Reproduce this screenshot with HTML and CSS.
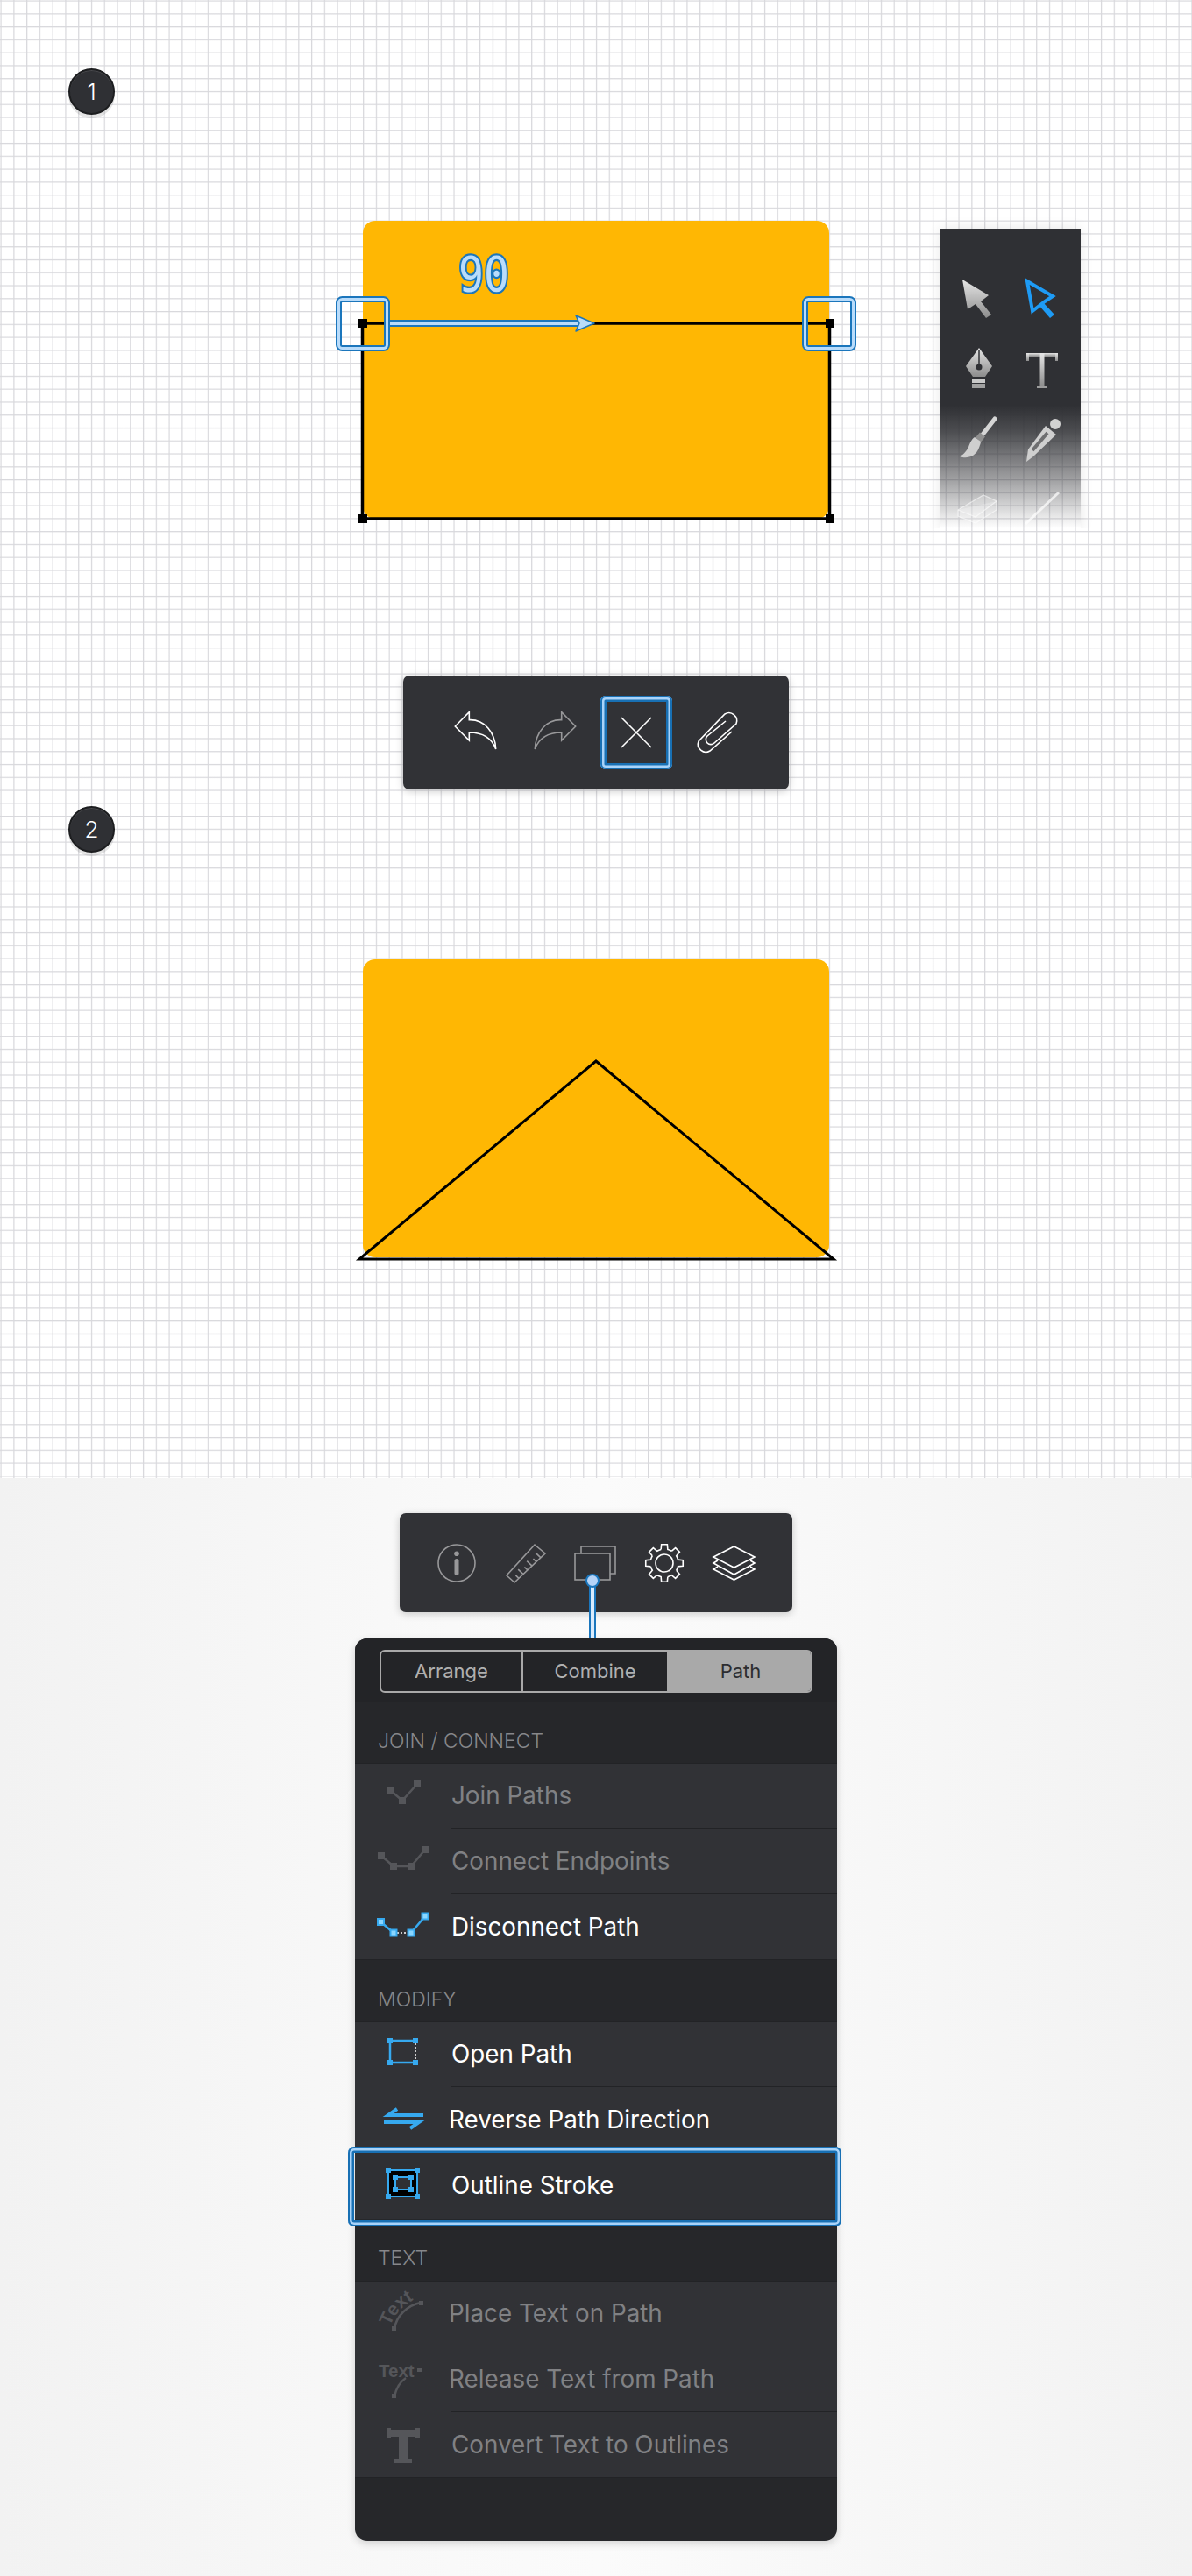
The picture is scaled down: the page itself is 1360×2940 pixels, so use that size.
FILE: index.html
```html
<!DOCTYPE html>
<html lang="en">
<head>
<title>Outline Stroke</title>
<link rel="stylesheet" href="styles.css">
</head>
<body>

<svg class="defs" width="0" height="0">
  <defs>
    <linearGradient id="metal" x1="0" y1="0" x2="0" y2="1">
      <stop offset="0" stop-color="#e6e6e6"/>
      <stop offset="1" stop-color="#8c8c8c"/>
    </linearGradient>
  </defs>
</svg>

<section class="canvas">
  <div class="badge badge-one">1</div>

  <svg class="scene scene-one" width="620" height="370" viewBox="0 0 620 370">
    <rect class="paper" x="44" y="12" width="532" height="340" rx="14"/>
    <path class="outline" d="M43.5 129H576.5V352H43.5Z"/>
    <rect class="node" x="39" y="124" width="10" height="10"/>
    <rect class="node" x="572" y="124" width="10" height="10"/>
    <rect class="node" x="39" y="347" width="10" height="10"/>
    <rect class="node" x="572" y="347" width="10" height="10"/>
    <path class="blue-dark" d="M75 129H292"/>
    <path class="blue-light" d="M75 129H292"/>
    <path class="blue-head" d="M287 120L308 129L287 138L291 129Z"/>
    <rect class="blue-dark hit" x="16.5" y="101.5" width="55" height="56" rx="4"/>
    <rect class="blue-light hit" x="16.5" y="101.5" width="55" height="56" rx="4"/>
    <rect class="blue-dark hit" x="548.5" y="101.5" width="55" height="56" rx="4"/>
    <rect class="blue-light hit" x="548.5" y="101.5" width="55" height="56" rx="4"/>
    <text class="angle" x="153" y="92" textLength="58" lengthAdjust="spacingAndGlyphs">90</text>
  </svg>

  <div class="toolbox">
    <svg class="tool" viewBox="0 0 74 80"><path fill="url(#metal)" d="M18 18L48 36L39 43L51 58L45 62L33 46L24 52Z"/></svg>
    <svg class="tool" viewBox="0 0 74 80"><path class="tool-blue" d="M18 20L47 37L38 43L33 47L24 54Z"/><path class="tool-blue-fill" d="M36 44L49 58L44 62L31 47Z"/></svg>
    <svg class="tool" viewBox="0 0 74 80">
      <path fill="url(#metal)" d="M37 16L52 37L44 49H30L22 37Z"/>
      <path class="tool-cut" d="M37 18V36"/>
      <circle class="tool-hole" cx="37" cy="38" r="3.5"/>
      <rect fill="#c8c8c8" x="29" y="51" width="15" height="5"/>
      <rect fill="#a0a0a0" x="29" y="57" width="15" height="5"/>
    </svg>
    <svg class="tool" viewBox="0 0 74 80">
      <rect fill="url(#metal)" x="17" y="22" width="36" height="4"/>
      <rect fill="url(#metal)" x="17" y="22" width="3" height="9"/>
      <rect fill="url(#metal)" x="50" y="22" width="3" height="9"/>
      <rect fill="url(#metal)" x="32.5" y="22" width="5" height="38"/>
      <rect fill="#9c9c9c" x="29" y="59" width="12" height="3"/>
    </svg>
    <svg class="tool" viewBox="0 0 74 80">
      <path class="tool-handle" d="M55 17L41 35"/>
      <path class="tool-ferrule" d="M41 35L36 41"/>
      <path fill="#cfcfcf" d="M32 38C26 42 26 50 22 54C20 57 17 59 15 60C22 63 33 61 37 50C38 47 39 45 39 43Z"/>
    </svg>
    <svg class="tool" viewBox="0 0 74 80">
      <circle fill="#d2d2d2" cx="50" cy="23" r="6"/>
      <path fill="#cfcfcf" d="M39 25L51 35L25 60L17 66L19 52Z"/>
      <path class="tool-slit" d="M24 53L41 33"/>
    </svg>
    <svg class="tool tool-faint" viewBox="0 0 74 80"><path d="M13 41L42 24L57 31V41L33 56L13 48Z"/><path d="M13 41L33 49L57 31"/></svg>
    <svg class="tool" viewBox="0 0 74 80"><path class="tool-ghost" d="M54 21L16 57"/></svg>
  </div>

  <div class="toolbar toolbar-edit">
    <div class="tb-cell">
      <svg class="tb-icon" viewBox="0 0 82 84"><path class="line-white" d="M18.3 35L34.3 18.7V27.7C52 27 64 42 64.7 61C60 48 50 42 34.3 42V51Z"/></svg>
    </div>
    <div class="tb-cell">
      <svg class="tb-icon" viewBox="0 0 82 84"><path class="line-gray" transform="translate(82 0) scale(-1 1)" d="M18.3 35L34.3 18.7V27.7C52 27 64 42 64.7 61C60 48 50 42 34.3 42V51Z"/></svg>
    </div>
    <div class="tb-cell tb-active">
      <svg class="tb-icon" viewBox="0 0 82 84"><path class="line-white" d="M24 25L58 59M58 25L24 59"/></svg>
    </div>
    <div class="tb-cell">
      <svg class="tb-icon" viewBox="0 0 82 84"><path class="line-white" d="M58 41L33 63A9 9 0 0 1 20 52L50 21A9 9 0 0 1 63 32L38 54A5.5 5.5 0 0 1 30 46L51 29"/></svg>
    </div>
  </div>

  <svg class="scene scene-two" width="620" height="400" viewBox="0 0 620 400">
    <rect class="paper" x="34" y="15" width="532" height="340" rx="14"/>
    <path class="outline-miter" d="M300 131L571 357H30Z"/>
  </svg>

  <div class="badge badge-two">2</div>
</section>

<section class="panel">
  <div class="toolbar toolbar-main">
    <svg class="tm-icon" viewBox="0 0 60 60">
      <circle class="line-gray" cx="30" cy="30" r="21"/>
      <circle class="fill-gray" cx="30" cy="19.3" r="2.8"/>
      <rect class="fill-gray" x="27.5" y="25" width="5" height="19" rx="2.5"/>
    </svg>
    <svg class="tm-icon" viewBox="0 0 60 60">
      <path class="line-gray" d="M8 44L40 9L52 19L17 52Z"/>
      <path class="line-gray" d="M22 47.3L18.4 43.9M27 42.6L21.2 37.1M32 37.9L28.4 34.5M37 33.2L31.2 27.7M42 28.5L38.4 25.1M47 23.8L41.2 18.3"/>
    </svg>
    <svg class="tm-icon" viewBox="0 0 60 60">
      <path class="line-gray" d="M14 19V11H53V42H47"/>
      <rect class="line-gray" x="7" y="19" width="40" height="30"/>
    </svg>
    <svg class="tm-icon" viewBox="0 0 60 60">
      <defs><path id="tooth" d="M26.13 14.48L26.64 8.76H33.36L33.87 14.48A16 16 0 0 1 38.24 16.29"/></defs>
      <g class="line-white">
        <use href="#tooth"/>
        <use href="#tooth" transform="rotate(45 30 30)"/>
        <use href="#tooth" transform="rotate(90 30 30)"/>
        <use href="#tooth" transform="rotate(135 30 30)"/>
        <use href="#tooth" transform="rotate(180 30 30)"/>
        <use href="#tooth" transform="rotate(225 30 30)"/>
        <use href="#tooth" transform="rotate(270 30 30)"/>
        <use href="#tooth" transform="rotate(315 30 30)"/>
        <circle cx="30" cy="30" r="10"/>
      </g>
    </svg>
    <svg class="tm-icon" viewBox="0 0 60 60">
      <path class="line-white" d="M29.5 11L53 23L29.5 35L6 23Z"/>
      <path class="line-white" d="M11 27L6 30L29.5 43L53 30L48 27M11 34L6 37L29.5 49L53 37L48 34"/>
    </svg>
    <div class="connector"></div>
  </div>

  <div class="menu">
    <div class="menu-top">
      <div class="segments">
        <div class="seg">Arrange</div>
        <div class="seg seg-mid">Combine</div>
        <div class="seg seg-on">Path</div>
      </div>
    </div>

    <h2 class="menu-title">JOIN / CONNECT</h2>
    <ul class="rows">
      <li class="row row-off">
        <svg class="row-icon" viewBox="0 0 110 75">
          <path class="path-off" d="M40 31L54 43L71 24"/>
          <rect class="node-off" x="36" y="27" width="8" height="8"/><rect class="node-off" x="50" y="39" width="8" height="8"/><rect class="node-off" x="67" y="20" width="8" height="8"/>
        </svg>
        <span class="row-label">Join Paths</span>
      </li>
      <li class="row row-off">
        <svg class="row-icon" viewBox="0 0 110 75">
          <path class="path-off" d="M30 31L44 43H64L80 24"/>
          <rect class="node-off" x="26" y="27" width="8" height="8"/><rect class="node-off" x="40" y="39" width="8" height="8"/><rect class="node-off" x="60" y="39" width="8" height="8"/><rect class="node-off" x="76" y="20" width="8" height="8"/>
        </svg>
        <span class="row-label">Connect Endpoints</span>
      </li>
      <li class="row">
        <svg class="row-icon" viewBox="0 0 110 75">
          <path class="path-on" d="M30 32L44 44M64 44L80 25"/>
          <path class="path-dots" d="M48 44H60"/>
          <rect class="node-on" x="26" y="28" width="7" height="7"/><rect class="node-on" x="40.5" y="40.5" width="7" height="7"/><rect class="node-on" x="60.5" y="40.5" width="7" height="7"/><rect class="node-on" x="76.5" y="21.5" width="7" height="7"/>
        </svg>
        <span class="row-label">Disconnect Path</span>
      </li>
    </ul>

    <h2 class="menu-title">MODIFY</h2>
    <ul class="rows">
      <li class="row">
        <svg class="row-icon" viewBox="0 0 110 75">
          <path class="path-on" d="M69 22H40V47H69"/>
          <path class="path-dots" d="M69 25V44"/>
          <rect class="node-solid" x="37" y="19" width="6" height="6"/><rect class="node-solid" x="66" y="19" width="6" height="6"/><rect class="node-solid" x="37" y="44" width="6" height="6"/><rect class="node-solid" x="66" y="44" width="6" height="6"/>
        </svg>
        <span class="row-label">Open Path</span>
      </li>
      <li class="row">
        <svg class="row-icon" viewBox="0 0 110 75">
          <path class="path-thick" d="M78 32H38L48 25M33 40H73L63 47"/>
        </svg>
        <span class="row-label row-tight">Reverse Path Direction</span>
      </li>
      <li class="row row-picked">
        <svg class="row-icon" viewBox="0 0 110 75">
          <rect class="box-black" x="38" y="20" width="33" height="30"/>
          <rect class="box-inner" x="46" y="28" width="18" height="14"/>
          <rect class="node-solid" x="35" y="17" width="6" height="6"/><rect class="node-solid" x="68" y="17" width="6" height="6"/><rect class="node-solid" x="35" y="47" width="6" height="6"/><rect class="node-solid" x="68" y="47" width="6" height="6"/>
          <rect class="node-solid" x="43" y="25" width="6" height="6"/><rect class="node-solid" x="61" y="25" width="6" height="6"/><rect class="node-solid" x="43" y="39" width="6" height="6"/><rect class="node-solid" x="61" y="39" width="6" height="6"/>
        </svg>
        <span class="row-label">Outline Stroke</span>
      </li>
    </ul>

    <h2 class="menu-title menu-title-last">TEXT</h2>
    <ul class="rows">
      <li class="row row-off">
        <svg class="row-icon" viewBox="0 0 110 75">
          <path class="path-off" d="M45 55C47 40 60 28 75 25"/>
          <rect class="node-off" x="42" y="52" width="5" height="5"/><rect class="node-off" x="73" y="23" width="5" height="5"/>
          <path id="text-arc" class="arc" d="M40 52C44 40 54 28 70 20"/>
          <text class="icon-word icon-word-big"><textPath href="#text-arc">Text</textPath></text>
        </svg>
        <span class="row-label row-tight">Place Text on Path</span>
      </li>
      <li class="row row-off">
        <svg class="row-icon" viewBox="0 0 110 75">
          <path class="path-off" d="M45 57C47 48 52 40 58 36"/>
          <rect class="node-off" x="42" y="54" width="5" height="5"/><rect class="node-off" x="71" y="25" width="5" height="4"/>
          <text class="icon-word" x="27" y="35">Text</text>
        </svg>
        <span class="row-label row-tight">Release Text from Path</span>
      </li>
      <li class="row row-off">
        <svg class="row-icon" viewBox="0 0 110 75">
          <rect class="node-off" x="36" y="20" width="38" height="8"/>
          <rect class="node-off" x="36" y="18" width="5" height="12"/><rect class="node-off" x="69" y="18" width="5" height="12"/>
          <rect class="node-off" x="50" y="20" width="10" height="36"/>
          <rect class="node-off" x="45" y="53" width="20" height="5"/>
        </svg>
        <span class="row-label">Convert Text to Outlines</span>
      </li>
    </ul>
  </div>
</section>

</body>
</html>
```

FILE: styles.css
```css
body {
  margin: 0;
  font-family: Inter, "Liberation Sans", sans-serif;
  background: #f4f4f4;
}
.defs {
  position: absolute;
}

/* graph paper area */
.canvas {
  position: relative;
  height: 1687px;
  overflow: hidden;
  background-color: #fff;
  background-image:
    repeating-linear-gradient(to right, transparent 0, #d8d8dc 1px, transparent 2.4px, transparent 14.77px),
    repeating-linear-gradient(to bottom, transparent 0, #d8d8dc 1px, transparent 2.4px, transparent 14.77px);
}
.badge {
  position: absolute;
  left: 78px;
  width: 53px;
  height: 53px;
  box-sizing: border-box;
  border: 2px solid #1d1e20;
  border-radius: 50%;
  background: #2f3034;
  box-shadow: 0 4px 0 rgba(0, 0, 0, 0.1), inset 0 1px 0 rgba(255, 255, 255, 0.12);
  color: #fff;
  font-weight: 300;
  font-size: 26px;
  line-height: 49px;
  text-align: center;
}
.badge-one { top: 78px; }
.badge-two { top: 920px; }

.scene {
  position: absolute;
}
.scene-one { left: 370px; top: 240px; }
.scene-two { left: 380px; top: 1080px; }

.paper { fill: #ffb703; }
.outline { fill: none; stroke: #000; stroke-width: 3.5; }
.outline-miter { fill: none; stroke: #000; stroke-width: 3; stroke-linejoin: miter; }
.node { fill: #000; }
.blue-dark { fill: none; stroke: #1b76bc; stroke-width: 8; }
.blue-light { fill: none; stroke: #b9dcfb; stroke-width: 4; }
.blue-head { fill: #b9dcfb; stroke: #1b76bc; stroke-width: 1.5; stroke-linejoin: round; }
.hit.blue-dark { stroke-width: 7; }
.hit.blue-light { stroke-width: 3; }
.angle {
  font-family: "DejaVu Sans Mono", monospace;
  font-size: 56px;
  fill: #b9dcfb;
  stroke: #1b76bc;
  stroke-width: 4.5;
  paint-order: stroke;
}

/* tool strip, fades out at the bottom */
.toolbox {
  position: absolute;
  left: 1073px;
  top: 261px;
  width: 160px;
  height: 342px;
  box-sizing: border-box;
  padding: 40px 0 0 7px;
  display: grid;
  grid-template-columns: 74px 74px;
  grid-auto-rows: 80px;
  background: linear-gradient(#2f3034 59%, rgba(47, 48, 52, 0.85) 68%, rgba(47, 48, 52, 0.45) 84%, rgba(47, 48, 52, 0) 100%);
  box-shadow: 0 0 14px rgba(0, 0, 0, 0.1);
  clip-path: inset(-20px -20px 0 -20px);
}
.tool {
  width: 74px;
  height: 80px;
}
.tool-blue { fill: none; stroke: #1e9bf5; stroke-width: 4; stroke-linejoin: miter; }
.tool-blue-fill { fill: #1e9bf5; }
.tool-cut { stroke: #2f3034; stroke-width: 1.5; }
.tool-hole { fill: #2f3034; }
.tool-handle { stroke: #d5d5d5; stroke-width: 5; stroke-linecap: round; }
.tool-ferrule { stroke: #8f8f8f; stroke-width: 8; }
.tool-slit { stroke: #6e6e70; stroke-width: 4; }
.tool-faint path { fill: rgba(255, 255, 255, 0.22); stroke: rgba(255, 255, 255, 0.55); stroke-width: 1.2; }
.tool-ghost { stroke: rgba(255, 255, 255, 0.7); stroke-width: 3; }

/* toolbars */
.toolbar {
  display: flex;
  align-items: center;
  justify-content: center;
  box-sizing: border-box;
  background: #313236;
  border-radius: 7px;
  box-shadow: 0 2px 10px rgba(0, 0, 0, 0.2);
}
.toolbar-edit {
  position: absolute;
  left: 460px;
  top: 771px;
  width: 440px;
  height: 130px;
  gap: 10px;
}
.tb-cell {
  box-sizing: border-box;
  width: 82px;
  height: 84px;
  position: relative;
}
.tb-icon {
  display: block;
  width: 82px;
  height: 84px;
}
.tb-active {
  border-radius: 6px;
  box-shadow:
    inset 0 0 0 2px #1870b4,
    inset 0 0 0 4.5px #a9d3f9,
    inset 0 0 0 7px #1870b4;
}
.line-white { fill: none; stroke: #fff; stroke-width: 1.6; }
.line-gray { fill: none; stroke: #98989a; stroke-width: 1.6; }
.fill-gray { fill: #98989a; }

/* lower part */
.panel {
  display: flex;
  flex-direction: column;
  align-items: center;
  height: 1253px;
  box-sizing: border-box;
  padding-top: 40px;
  background: linear-gradient(to right, #f2f2f2 0, #f8f8f8 32%, #fbfbfb 50%, #f8f8f8 68%, #f2f2f2 100%);
}
.toolbar-main {
  position: relative;
  width: 448px;
  height: 113px;
  flex: none;
  gap: 19.25px;
  padding-right: 2px;
}
.tm-icon {
  width: 60px;
  height: 60px;
}
.connector {
  position: absolute;
  left: 216px;
  top: 76px;
  width: 8px;
  height: 67px;
  box-sizing: border-box;
  border: solid #1b76bc;
  border-width: 0 2px;
  background: #d9ebfd;
}
.connector::before {
  content: "";
  position: absolute;
  left: -6px;
  top: -7px;
  width: 16px;
  height: 16px;
  box-sizing: border-box;
  border: 2px solid #1b76bc;
  border-radius: 50%;
  background: #b5d3f7;
}

.menu {
  margin-top: 30px;
  width: 550px;
  height: 1030px;
  flex: none;
  background: #26272a;
  border-radius: 14px;
  box-shadow: 0 3px 10px rgba(0, 0, 0, 0.16);
}
.menu-top {
  height: 72px;
  padding: 13px 28px 0;
  box-sizing: border-box;
  background: #232427;
  border-radius: 14px 14px 0 0;
}
.segments {
  display: flex;
  height: 49px;
  box-sizing: border-box;
  border: 2px solid #a9a9a9;
  border-radius: 6px;
  overflow: hidden;
}
.seg {
  flex: 0 0 162px;
  box-sizing: border-box;
  border-right: 2px solid #a9a9a9;
  color: #b0b0b0;
  font-size: 22px;
  line-height: 44px;
  text-align: center;
}
.seg-mid {
  flex-basis: 164px;
  border-right: 0;
}
.seg-on {
  flex: 1;
  border-right: 0;
  padding-left: 4px;
  background: #a9a9a9;
  color: #2c2d30;
}
.menu-title {
  margin: 0;
  height: 70px;
  box-sizing: border-box;
  padding: 30px 0 0 26px;
  color: #87878a;
  font-weight: 300;
  font-size: 23px;
  line-height: 30px;
}
.menu-title-last {
  height: 71px;
}
.rows {
  margin: 0;
  padding: 0;
  list-style: none;
  background: #313236;
  box-shadow: inset 0 1px 0 #222326, inset 0 -1px 0 #222326;
}
.row {
  display: flex;
  height: 75px;
  position: relative;
  color: #fff;
}
.row-off {
  color: #808184;
}
.row-icon {
  width: 110px;
  height: 75px;
  flex: none;
}
.row-label {
  flex: 1;
  box-sizing: border-box;
  border-bottom: 1px solid #222326;
  font-size: 27.8px;
  line-height: 74px;
}
.row:last-child .row-label {
  border-bottom: 0;
}
.row-tight {
  text-indent: -3px;
}
.row-picked {
  background: #2f3034;
}
.row-picked::after {
  content: "";
  position: absolute;
  left: -8px;
  right: -5px;
  top: -7px;
  bottom: -9px;
  border-radius: 7px;
  box-shadow:
    inset 0 0 0 2px #1870b4,
    inset 0 0 0 4.5px #a9d3f9,
    inset 0 0 0 7px #1870b4;
}

/* menu icons */
.path-off { fill: none; stroke: #55565a; stroke-width: 2.5; }
.node-off { fill: #55565a; }
.path-on { fill: none; stroke: #36a9ef; stroke-width: 2.5; }
.path-dots { fill: none; stroke: #fff; stroke-width: 1.5; stroke-dasharray: 2 2; }
.path-thick { fill: none; stroke: #36a9ef; stroke-width: 4; }
.node-on { fill: #8ad6ff; stroke: #36a9ef; stroke-width: 2; }
.node-solid { fill: #36a9ef; }
.box-black { fill: #000; stroke: #36a9ef; stroke-width: 2; }
.box-inner { fill: #2f3034; stroke: #36a9ef; stroke-width: 2; }
.arc { fill: none; }
.icon-word {
  font-family: "Liberation Sans", sans-serif;
  font-weight: bold;
  font-size: 20.5px;
  fill: #55565a;
}
.icon-word-big {
  font-size: 21px;
}
```
